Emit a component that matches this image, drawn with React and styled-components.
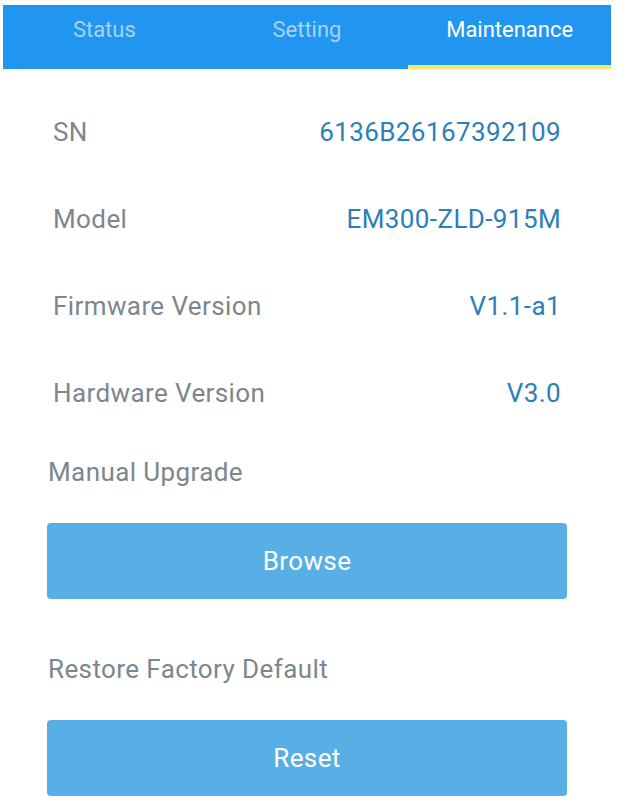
import React from "react";
import styled, { createGlobalStyle } from "styled-components";

const Global = createGlobalStyle`
  html, body { margin: 0; padding: 0; background: #fff; }
  body { font-family: Roboto, "Noto Sans", sans-serif; }
`;

const Page = styled.div`
  width: 628px;
  height: 803px;
  overflow: hidden;
  background: #fff;
  padding-top: 5px;
  box-sizing: border-box;
`;

const TabBar = styled.div`
  margin: 0 17px 0 3px;
  height: 64px;
  background: #2196f0;
  display: grid;
  grid-template-columns: 1fr 1fr 1fr;
`;

const Tab = styled.div`
  display: flex;
  align-items: flex-start;
  justify-content: center;
  padding-top: 12px;
  box-sizing: border-box;
  font-size: 22px;
  color: ${(p) => (p.$active ? "#ffffff" : "#a6d3f6")};
  border-bottom: 4px solid ${(p) => (p.$active ? "#f3ea6a" : "transparent")};
`;

const Rows = styled.div`
  padding: 48px 67px 0 53px;
  display: flex;
  flex-direction: column;
  gap: 57px;
`;

const Row = styled.div`
  display: flex;
  justify-content: space-between;
  align-items: center;
  height: 30px;
  font-size: 26px;
  letter-spacing: 0.4px;
`;

const Label = styled.span`
  color: #7b878d;
`;

const Value = styled.span`
  color: #2b7fba;
`;

const Section = styled.div`
  padding: 0 61px 0 47px;
  display: flex;
  flex-direction: column;
  margin-top: ${(p) => p.$top}px;
`;

const SectionTitle = styled.div`
  font-size: 26px;
  letter-spacing: 0.4px;
  color: #7b878d;
  height: 30px;
  line-height: 30px;
  padding-left: 1px;
  margin-bottom: 36px;
`;

const Button = styled.div`
  height: 76px;
  border-radius: 4px;
  background: #58afe6;
  color: #fff;
  font-size: 26px;
  letter-spacing: 0.4px;
  display: flex;
  align-items: center;
  justify-content: center;
`;

const rows = [
  ["SN", "6136B26167392109"],
  ["Model", "EM300-ZLD-915M"],
  ["Firmware Version", "V1.1-a1"],
  ["Hardware Version", "V3.0"],
];

export default function App() {
  return (
    <Page>
      <Global />
      <TabBar>
        <Tab>Status</Tab>
        <Tab>Setting</Tab>
        <Tab $active>Maintenance</Tab>
      </TabBar>
      <Rows>
        {rows.map(([l, v]) => (
          <Row key={l}>
            <Label>{l}</Label>
            <Value>{v}</Value>
          </Row>
        ))}
      </Rows>
      <Section $top={49}>
        <SectionTitle>Manual Upgrade</SectionTitle>
        <Button>Browse</Button>
      </Section>
      <Section $top={55}>
        <SectionTitle>Restore Factory Default</SectionTitle>
        <Button>Reset</Button>
      </Section>
    </Page>
  );
}
